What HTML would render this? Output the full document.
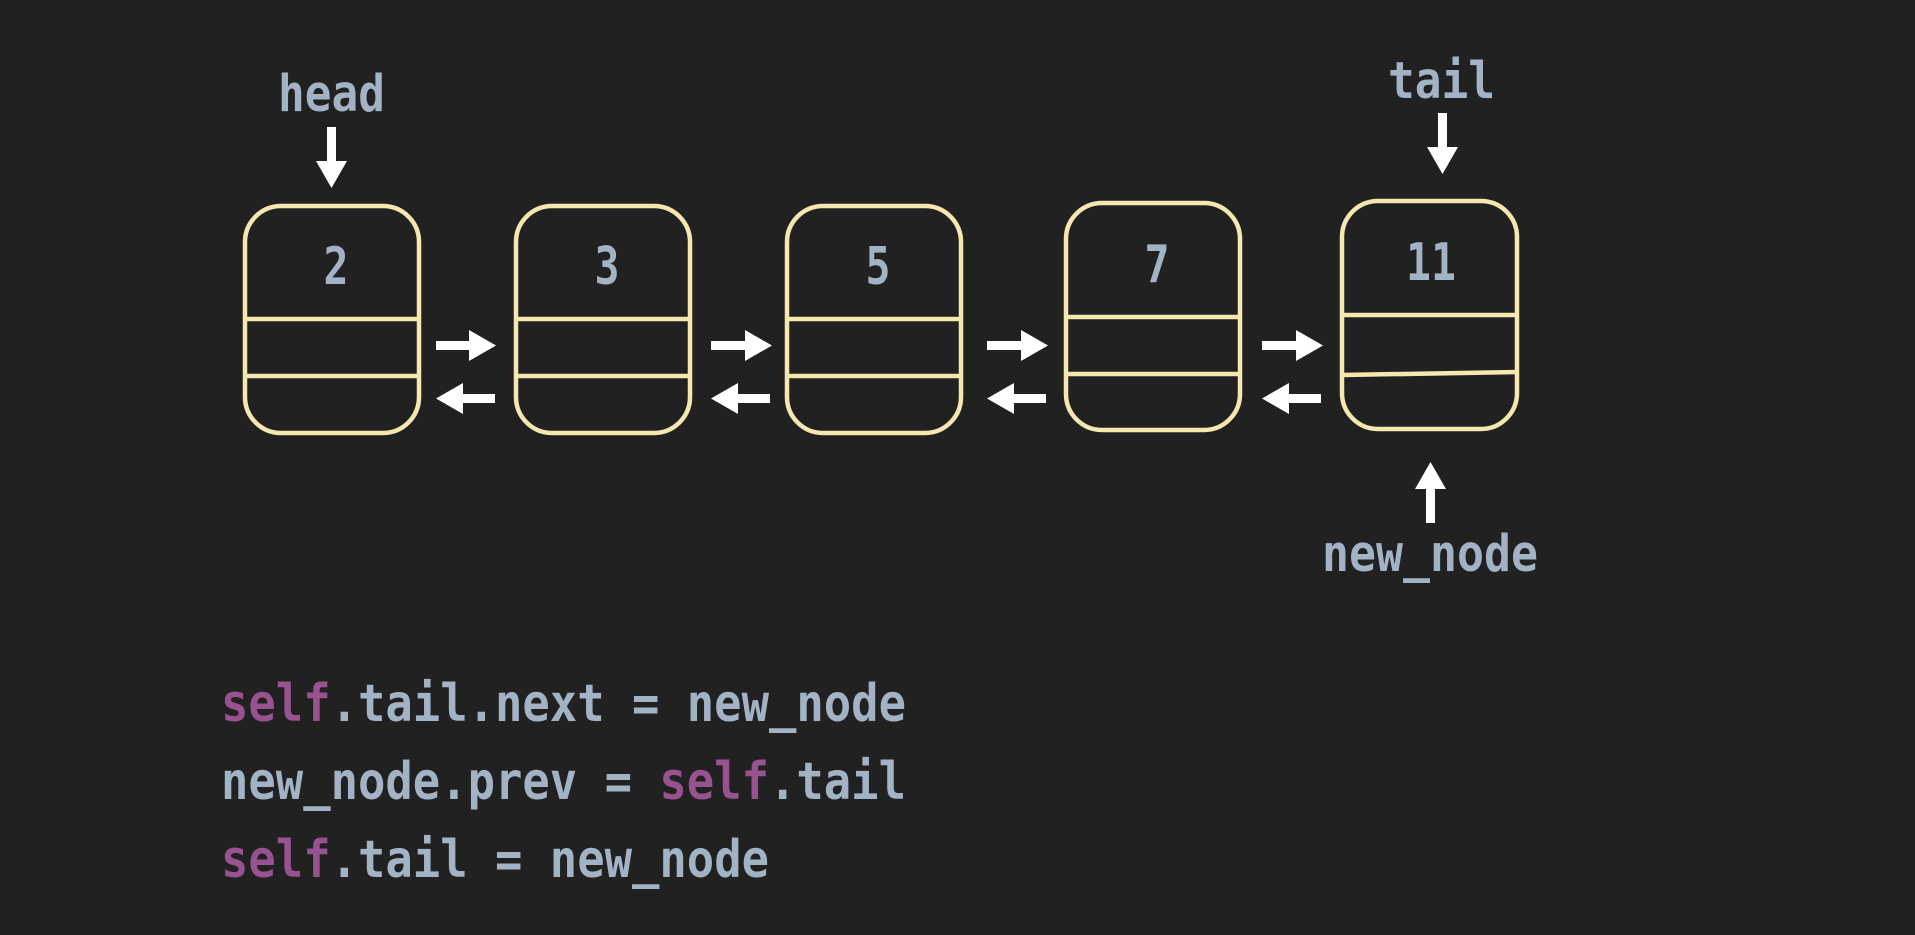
<!DOCTYPE html>
<html><head><meta charset="utf-8"><style>
html,body{margin:0;padding:0;background:#212121;}
svg{display:block}
text{font-family:"DejaVu Sans Mono","Liberation Mono",monospace;fill:#a3b3c6;font-weight:bold;}
.p{fill:#97528f}
</style></head><body>
<svg width="1915" height="935" viewBox="0 0 1915 935" xmlns="http://www.w3.org/2000/svg">
<rect width="1915" height="935" fill="#212121"/>
<g fill="none" stroke="#f6e7b0" stroke-width="4.5">
<rect x="245" y="206" width="174" height="227" rx="36"/>
<line x1="245" y1="319" x2="421" y2="319"/><line x1="245" y1="376" x2="421" y2="376"/>
<rect x="516" y="206" width="174" height="227" rx="36"/>
<line x1="516" y1="319" x2="692" y2="319"/><line x1="516" y1="376" x2="692" y2="376"/>
<rect x="787" y="206" width="174" height="227" rx="36"/>
<line x1="787" y1="319" x2="963" y2="319"/><line x1="787" y1="376" x2="963" y2="376"/>
<rect x="1066" y="203" width="174" height="227" rx="36"/>
<line x1="1066" y1="317" x2="1242" y2="317"/><line x1="1066" y1="374" x2="1242" y2="374"/>
<rect x="1342" y="201" width="175" height="228" rx="36"/>
<line x1="1342" y1="315" x2="1519" y2="315"/><line x1="1342" y1="375" x2="1519" y2="372"/>
</g>
<g font-size="52" text-anchor="middle">
<text x="336" y="284" textLength="25" lengthAdjust="spacingAndGlyphs">2</text>
<text x="607" y="284" textLength="25" lengthAdjust="spacingAndGlyphs">3</text>
<text x="878" y="284" textLength="25" lengthAdjust="spacingAndGlyphs">5</text>
<text x="1157" y="282" textLength="25" lengthAdjust="spacingAndGlyphs">7</text>
<text x="1431" y="280" textLength="50" lengthAdjust="spacingAndGlyphs">11</text>
</g>
<g fill="#ffffff">
<path d="M436 341h33v-11l27 15.5-27 15.5v-11h-33z"/>
<path d="M711 341h34v-11l27 15.5-27 15.5v-11h-34z"/>
<path d="M987 341h34v-11l27 15.5-27 15.5v-11h-34z"/>
<path d="M1262 341h34v-11l27 15.5-27 15.5v-11h-34z"/>
<path d="M495 394h-32v-11l-27 15.5 27 15.5v-11h32z"/>
<path d="M770 394h-32v-11l-27 15.5 27 15.5v-11h32z"/>
<path d="M1046 394h-32v-11l-27 15.5 27 15.5v-11h32z"/>
<path d="M1321 394h-32v-11l-27 15.5 27 15.5v-11h32z"/>
<path d="M327 127h9v34h11l-15.5 27-15.5-27h11z"/>
<path d="M1438 113h9v34h11l-15.5 27-15.5-27h11z"/>
<path d="M1426 523h9v-34h11l-15.5-27-15.5 27h11z"/>
</g>
<g font-size="51">
<text x="278" y="111" textLength="107" lengthAdjust="spacingAndGlyphs">head</text>
<text x="1388" y="98" textLength="107" lengthAdjust="spacingAndGlyphs">tail</text>
<text x="1322" y="571" textLength="216" lengthAdjust="spacingAndGlyphs">new_node</text>
</g>
<g font-size="52">
<text x="221" y="721" textLength="685" lengthAdjust="spacingAndGlyphs"><tspan class="p">self</tspan>.tail.next = new_node</text>
<text x="221" y="799" textLength="685" lengthAdjust="spacingAndGlyphs">new_node.prev = <tspan class="p">self</tspan>.tail</text>
<text x="221" y="877" textLength="548" lengthAdjust="spacingAndGlyphs"><tspan class="p">self</tspan>.tail = new_node</text>
</g>
</svg>
</body></html>
